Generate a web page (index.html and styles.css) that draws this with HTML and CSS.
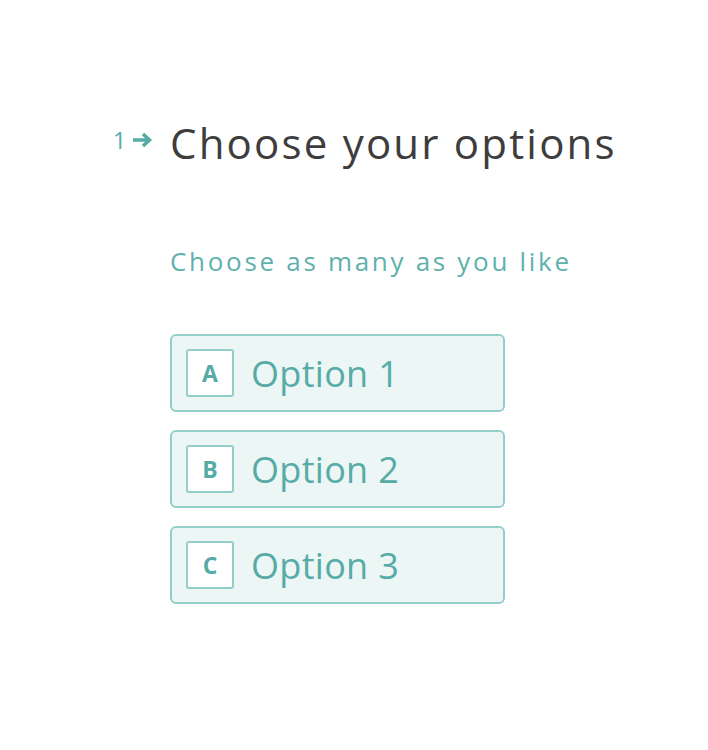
FILE: index.html
```html
<!DOCTYPE html>
<html lang="en">
<head>
    <meta charset="UTF-8">
    <meta name="viewport" content="width=device-width, initial-scale=1.0">
    <link rel="stylesheet" href="styles.css">
</head>
<body>

<div class="question">
    <div class="question-head">
        <div class="counter">
            <span>1</span>
            <svg width="22" height="16" viewBox="0 0 22 16">
                <path d="M1 8 H17 M11 2 L17.5 8 L11 14" fill="none" stroke="#56aba6" stroke-width="3.5"/>
            </svg>
        </div>
        <h1 class="title">Choose your options</h1>
    </div>

    <div class="body">
        <p class="hint">Choose as many as you like</p>

        <ul class="choices">
            <li class="choice">
                <span class="key">A</span>
                <span class="label">Option 1</span>
            </li>
            <li class="choice">
                <span class="key">B</span>
                <span class="label">Option 2</span>
            </li>
            <li class="choice">
                <span class="key">C</span>
                <span class="label">Option 3</span>
            </li>
        </ul>
    </div>
</div>

</body>
</html>
```

FILE: styles.css
```css
body {
    margin: 0;
    background-color: #fff;
    font-family: "Open Sans", Arial, sans-serif;
}

.question {
    padding: 114px 0 0 113px;
}

.question-head {
    display: flex;
    align-items: flex-start;
}

.counter {
    display: flex;
    align-items: center;
    gap: 6px;
    width: 57px;
    margin-top: 10px;
    color: #56aba6;
    font-size: 23px;
}

.title {
    margin: 0;
    font-size: 42px;
    font-weight: 400;
    color: #3d3d3d;
    letter-spacing: 2.2px;
}

.body {
    padding-left: 57px;
}

.hint {
    margin: 72px 0 0;
    font-size: 26px;
    color: #5fb1ac;
    letter-spacing: 2.7px;
}

.choices {
    list-style: none;
    margin: 55px 0 0;
    padding: 0;
    display: flex;
    flex-direction: column;
    gap: 18px;
}

.choice {
    display: flex;
    align-items: center;
    gap: 17px;
    width: 303px;
    height: 74px;
    padding: 0 14px;
    border: 2px solid #93cfca;
    border-radius: 6px;
    background-color: #ecf6f5;
}

.key {
    display: flex;
    align-items: center;
    justify-content: center;
    width: 44px;
    height: 44px;
    border: 2px solid #93cfca;
    border-radius: 3px;
    background-color: #fff;
    color: #56aba6;
    font-size: 23px;
    font-weight: 700;
}

.label {
    font-size: 36px;
    color: #56aba6;
    letter-spacing: 0.3px;
}
```
